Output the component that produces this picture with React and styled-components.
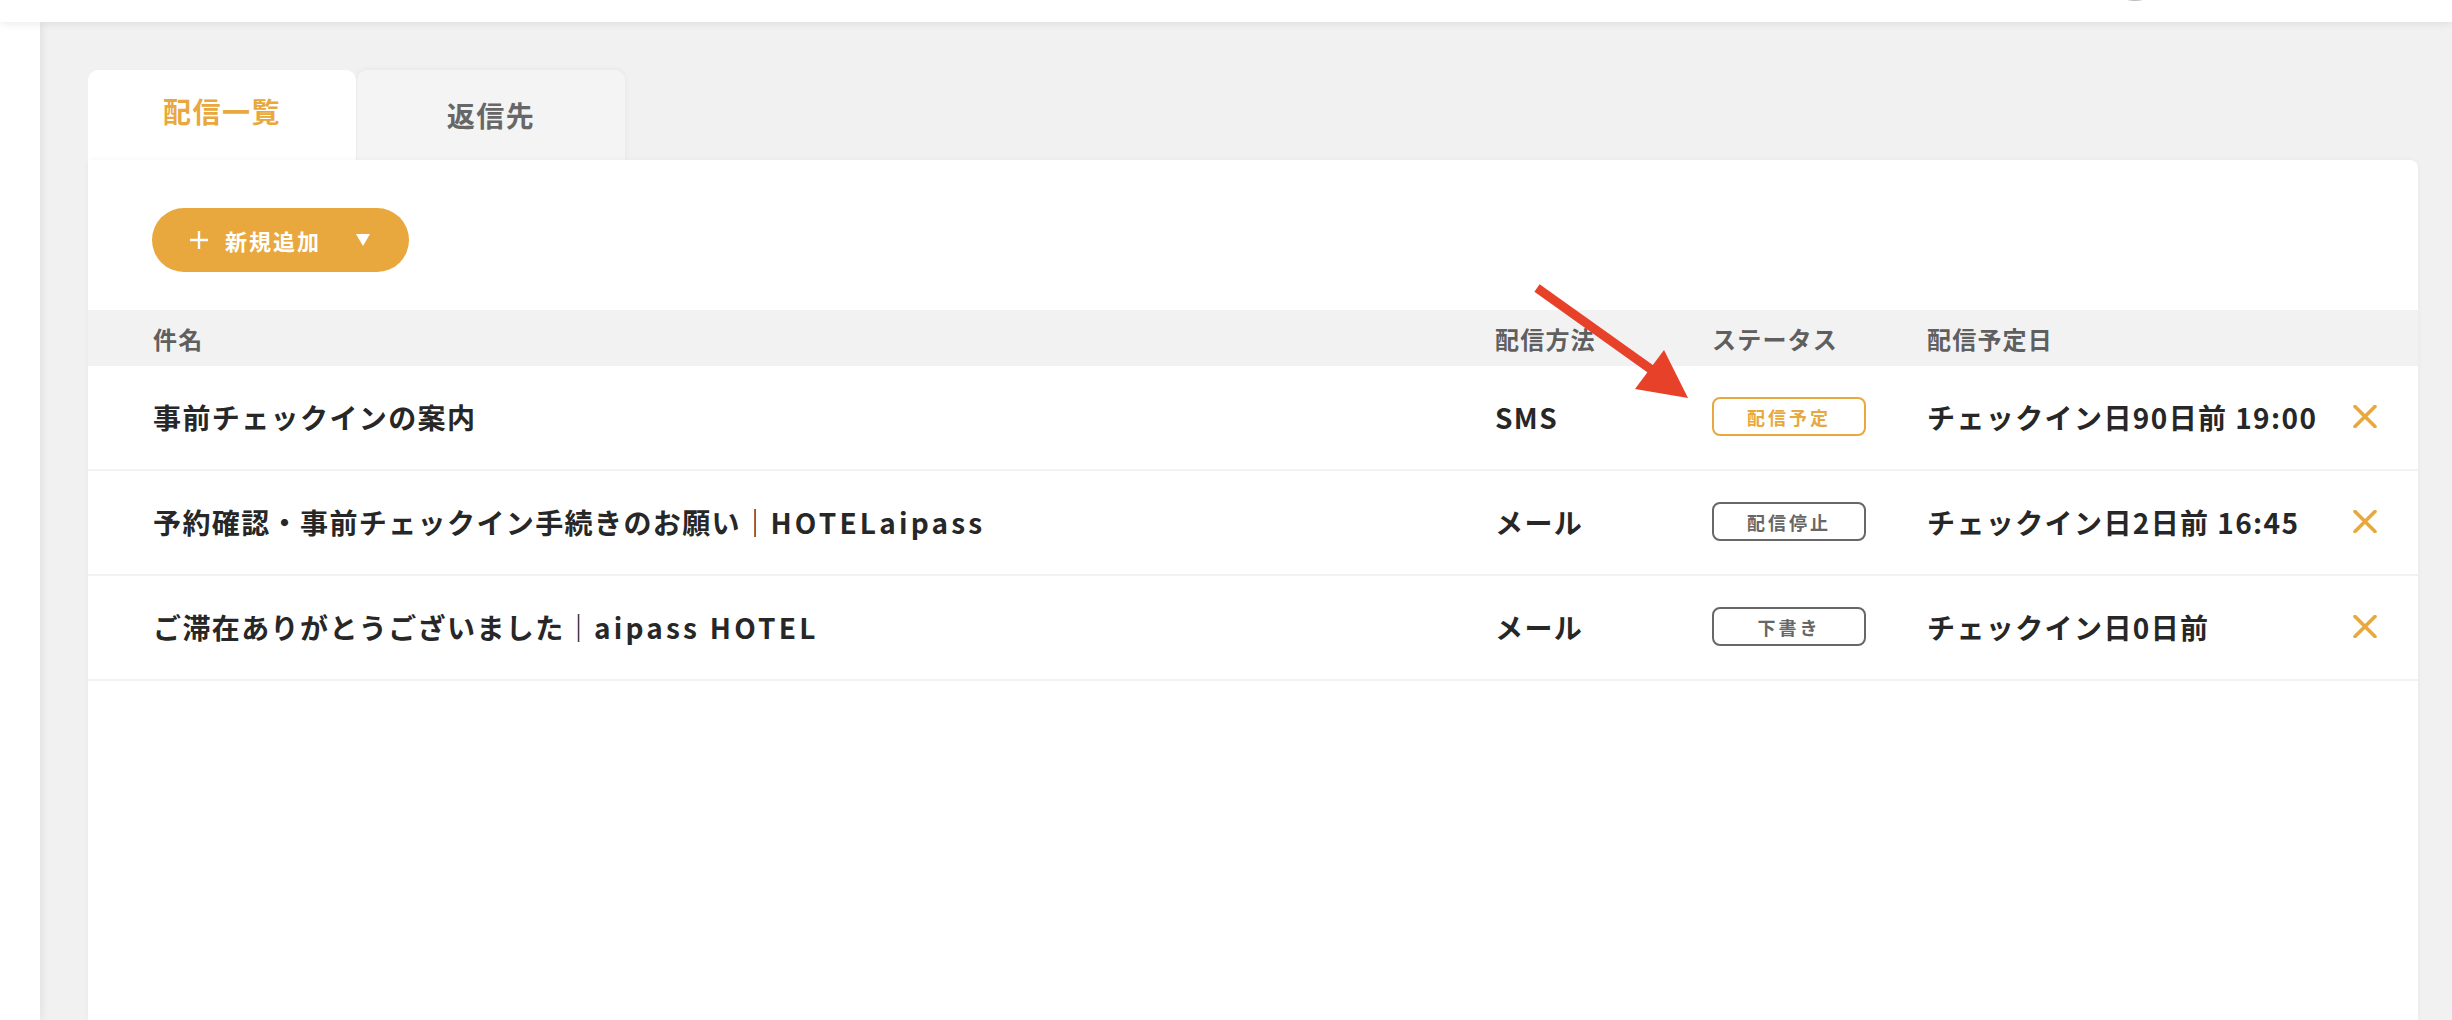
import React from 'react';
import styled, { createGlobalStyle } from 'styled-components';

const ORANGE = '#E8A83D';

const GlobalStyle = createGlobalStyle`
  html, body {
    margin: 0;
    padding: 0;
    background: #F1F1F1;
    font-family: "Noto Sans CJK JP", "Noto Sans", sans-serif;
    color: #272727;
  }
  * { box-sizing: border-box; }
`;

const Page = styled.div`
  display: flex;
  flex-direction: column;
  width: 2452px;
  height: 1020px;
  overflow: hidden;
`;

const TopBar = styled.header`
  height: 22px;
  flex: none;
  background: #fff;
  display: flex;
  justify-content: flex-end;
  padding-right: 285px;
  overflow: hidden;
  box-shadow: 0 2px 8px rgba(0, 0, 0, 0.08);
  position: relative;
  z-index: 3;
`;

const Avatar = styled.div`
  width: 64px;
  height: 64px;
  margin-top: -63px;
  border-radius: 50%;
  background: #bdbdbd;
`;

const Body = styled.div`
  flex: 1;
  display: flex;
  min-height: 0;
`;

const SideBar = styled.aside`
  width: 40px;
  flex: none;
  background: #fff;
  box-shadow: 2px 0 8px rgba(0, 0, 0, 0.07);
  position: relative;
  z-index: 2;
`;

const Main = styled.main`
  flex: 1;
  display: flex;
  flex-direction: column;
  padding: 48px 34px 0 48px;
  position: relative;
`;

const Tabs = styled.div`
  display: flex;
  gap: 1px;
  height: 90px;
`;

const Tab = styled.div`
  width: 268px;
  display: flex;
  align-items: center;
  justify-content: center;
  border-radius: 10px 10px 0 0;
  font-size: 28px;
  font-weight: 700;
  letter-spacing: 1.5px;
  padding-bottom: ${({ $active }) => ($active ? '8px' : '0')};
  color: ${({ $active }) => ($active ? ORANGE : '#676767')};
  background: ${({ $active }) => ($active ? '#fff' : '#F4F4F4')};
  box-shadow: ${({ $active }) => ($active ? 'none' : '0 0 6px rgba(0, 0, 0, 0.06)')};
  position: relative;
  z-index: ${({ $active }) => ($active ? 1 : 0)};
`;

const Card = styled.section`
  flex: 1;
  background: #fff;
  border-radius: 0 8px 0 0;
  box-shadow: 0 0 6px rgba(0, 0, 0, 0.04);
  position: relative;
  z-index: 1;
`;

const Toolbar = styled.div`
  padding: 48px 64px 38px;
`;

const AddButton = styled.button`
  width: 257px;
  height: 64px;
  border: none;
  border-radius: 32px;
  background: ${ORANGE};
  color: #fff;
  display: flex;
  align-items: center;
  padding: 0 0 0 38px;
  font-family: inherit;
  font-size: 22px;
  font-weight: 700;
  letter-spacing: 2px;
  cursor: pointer;
`;

const PlusIcon = styled.svg`
  width: 18px;
  height: 18px;
  margin-right: 17px;
`;

const Caret = styled.span`
  margin-left: 35px;
  width: 0;
  height: 0;
  border-left: 7.5px solid transparent;
  border-right: 7.5px solid transparent;
  border-top: 12px solid #fff;
`;

const Row = styled.div`
  display: grid;
  grid-template-columns: 1fr 217px 215px 426px 24px;
  align-items: center;
  padding: 0 41px 0 65px;
`;

const HeadRow = styled(Row)`
  height: 56px;
  background: #F2F2F2;
  font-size: 24px;
  font-weight: 700;
  color: #5f5f5f;
  letter-spacing: 1.2px;
`;

const DataRow = styled(Row)`
  height: 105px;
  padding-bottom: 2px;
  border-bottom: 2px solid #F2F2F2;
  font-size: 28px;
  font-weight: 700;
  letter-spacing: 1.4px;
  color: #272727;
`;

const Latin = styled.span`
  letter-spacing: 3.2px;
`;

const Badge = styled.span`
  width: 154px;
  height: 39px;
  display: flex;
  align-items: center;
  justify-content: center;
  border: 2px solid ${({ $color }) => $color};
  border-radius: 8px;
  color: ${({ $color }) => $color};
  font-size: 18px;
  font-weight: 700;
  letter-spacing: 3px;
`;

const DeleteIcon = styled.svg`
  width: 24px;
  height: 23px;
  cursor: pointer;
`;

const Arrow = styled.svg`
  position: absolute;
  left: 1480px;
  top: 260px;
  width: 220px;
  height: 150px;
  pointer-events: none;
  z-index: 5;
`;

const rows = [
  { title: ['事前チェックインの案内'], method: 'SMS', status: '配信予定', color: ORANGE, date: 'チェックイン日90日前 19:00' },
  { title: ['予約確認・事前チェックイン手続きのお願い｜', 'HOTELaipass'], method: 'メール', status: '配信停止', color: '#676767', date: 'チェックイン日2日前 16:45' },
  { title: ['ご滞在ありがとうございました｜', 'aipass HOTEL'], method: 'メール', status: '下書き', color: '#676767', date: 'チェックイン日0日前' },
];

export default function App() {
  return (
    <Page>
      <GlobalStyle />
      <TopBar>
        <Avatar />
      </TopBar>
      <Body>
        <SideBar />
        <Main>
          <Tabs>
            <Tab $active>配信一覧</Tab>
            <Tab>返信先</Tab>
          </Tabs>
          <Card>
            <Toolbar>
              <AddButton>
                <PlusIcon viewBox="0 0 18 18">
                  <path d="M9 0v18M0 9h18" stroke="#fff" strokeWidth="2.4" />
                </PlusIcon>
                新規追加
                <Caret />
              </AddButton>
            </Toolbar>
            <HeadRow>
              <span>件名</span>
              <span>配信方法</span>
              <span>ステータス</span>
              <span>配信予定日</span>
              <span />
            </HeadRow>
            {rows.map((r) => (
              <DataRow key={r.title.join('')}>
                <span>
                  {r.title[0]}
                  {r.title[1] && <Latin>{r.title[1]}</Latin>}
                </span>
                <span>{r.method}</span>
                <span>
                  <Badge $color={r.color}>{r.status}</Badge>
                </span>
                <span>{r.date}</span>
                <DeleteIcon viewBox="0 0 24 23">
                  <path d="M2 1.5l20 20M22 1.5l-20 20" stroke={ORANGE} strokeWidth="3.6" strokeLinecap="round" />
                </DeleteIcon>
              </DataRow>
            ))}
          </Card>
        </Main>
      </Body>
      {/* annotation arrow: page coords offset by (1480, 260) */}
      <Arrow viewBox="0 0 220 150">
        <line x1="57" y1="28" x2="172" y2="110" stroke="#E8412A" strokeWidth="9" />
        <polygon points="208,138 155,129 184,90" fill="#E8412A" />
      </Arrow>
    </Page>
  );
}
